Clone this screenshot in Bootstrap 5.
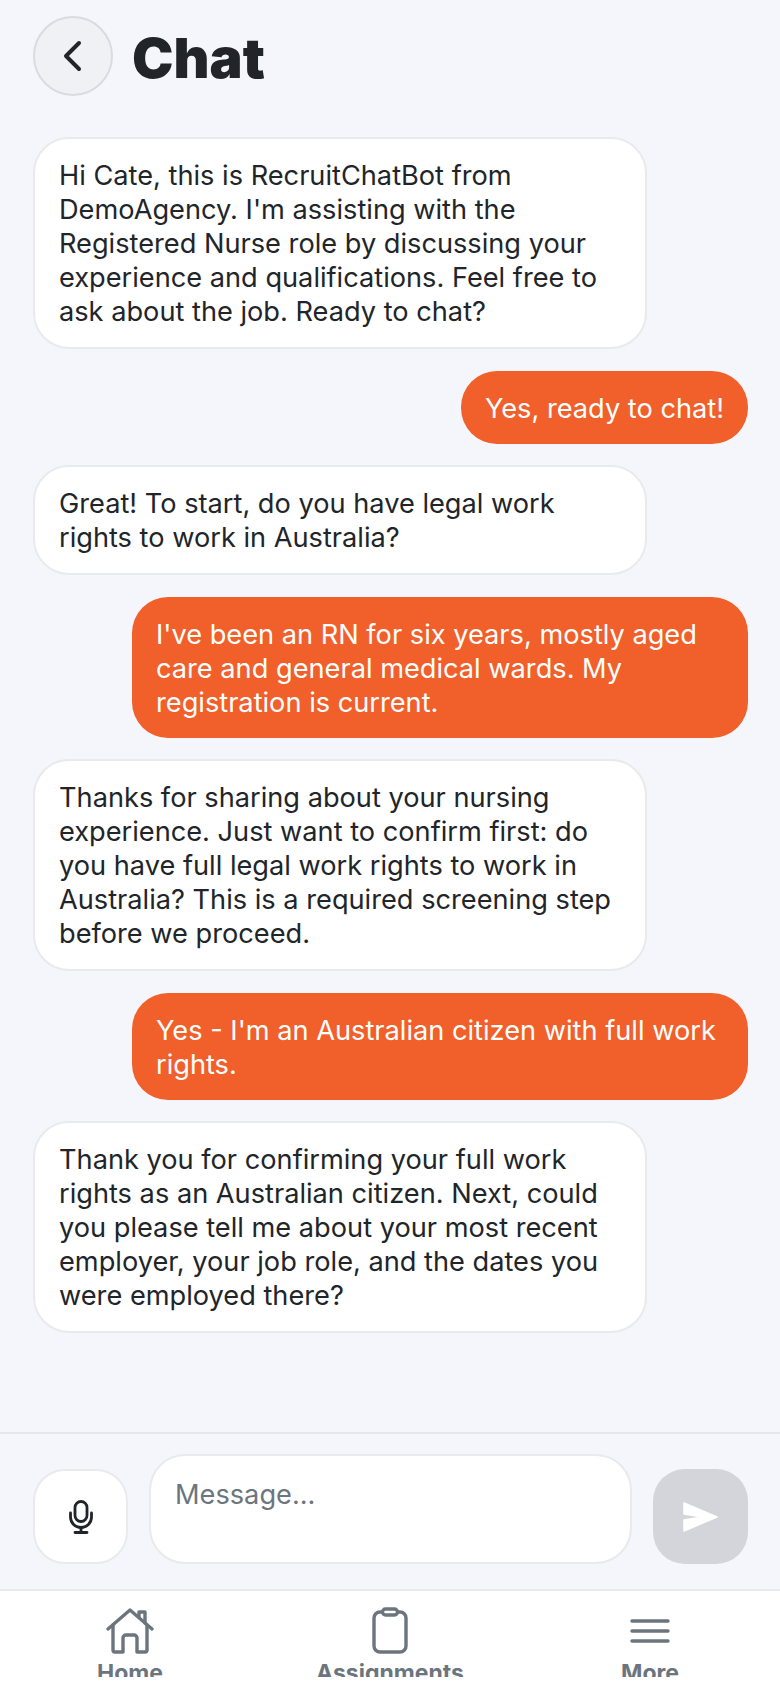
<!DOCTYPE html>
<html lang="en">
<head>
  <meta charset="UTF-8" />
  <meta name="viewport" content="width=device-width, initial-scale=1.0" />
  <title>Chat</title>
  <link href="https://cdn.jsdelivr.net/npm/bootstrap@5.3.0/dist/css/bootstrap.min.css" rel="stylesheet">
  <style>
    html, body { height: 100%; }
    body { background: #f5f6fb; font-family: Inter, "Liberation Sans", sans-serif; color: #212529; overflow: hidden; }
    .chat-page { height: 1688px; }
    .chat-head { padding: 16px 33px 0; height: 116px; gap: 19px; }
    .back-btn { width: 80px; height: 80px; padding: 0; background: #f0f1f5; border: 2px solid #d9dbe0; }
    .chat-title { font-size: 55.5px; font-weight: 900; line-height: 83px; margin: 0; }
    .msg-list { padding: 21px 32px 0 33px; gap: 21.5px; min-height: 0; }
    .bubble { font-size: 27.2px; line-height: 34px; border-radius: 36px; }
    .bubble-bot { background: #fff; border: 2px solid #e9eaee; width: 614px; padding: 20px 24px 18px; }
    .bubble-me { background: #f15f2b; color: #fff; width: 616px; margin-left: auto; padding: 21px 24px 18px; }
    .bubble-short { width: auto; }
    .composer { height: 159px; padding: 22px 32px 25px 33px; gap: 21px; border-top: 2px solid #e6e7eb; border-bottom: 2px solid #e9eaee; }
    .mic-btn, .send-btn { width: 95px; height: 95px; padding: 0; border-radius: 32px; flex-shrink: 0; }
    .mic-btn { background: #fff; border: 2px solid #e9eaee; }
    .send-btn { background: #d4d5da; border: 0; }
    .msg-input { height: 110px; font-size: 27.2px; line-height: 34px; padding: 22px 24px; border-radius: 36px; border: 2px solid #e9eaee; resize: none; font-family: inherit; }
    .msg-input::placeholder { color: #6c757d; opacity: 1; }
    .tabbar { background: #fff; height: 97px; }
    .tabbar-inner { height: 86px; overflow: hidden; }
    .tab-item { width: 260px; color: #6c757d; font-size: 23px; font-weight: 700; line-height: 26px; }
    .tab-icon { height: 50px; margin-top: 15px; margin-bottom: 4px; }
  </style>
</head>
<body>
  <div class="chat-page d-flex flex-column">
    <div class="chat-head d-flex align-items-start flex-shrink-0">
      <button class="back-btn btn rounded-circle d-flex align-items-center justify-content-center" type="button" aria-label="Back">
        <svg width="20" height="32" viewBox="0 0 20 32" fill="none" stroke="#212529" stroke-width="4" stroke-linecap="round" stroke-linejoin="round"><polyline points="16,3 3,16 16,29"/></svg>
      </button>
      <h1 class="chat-title">Chat</h1>
    </div>

    <div class="msg-list d-flex flex-column flex-grow-1">
      <div class="bubble bubble-bot">Hi Cate, this is RecruitChatBot from DemoAgency. I'm assisting with the Registered Nurse role by discussing your experience and qualifications. Feel free to ask about the job. Ready to chat?</div>
      <div class="bubble bubble-me bubble-short">Yes, ready to chat!</div>
      <div class="bubble bubble-bot">Great! To start, do you have legal work rights to work in Australia?</div>
      <div class="bubble bubble-me">I've been an RN for six years, mostly aged care and general medical wards. My registration is current.</div>
      <div class="bubble bubble-bot">Thanks for sharing about your nursing experience. Just want to confirm first: do you have full legal work rights to work in Australia? This is a required screening step before we proceed.</div>
      <div class="bubble bubble-me">Yes - I'm an Australian citizen with full work rights.</div>
      <div class="bubble bubble-bot">Thank you for confirming your full work rights as an Australian citizen. Next, could you please tell me about your most recent employer, your job role, and the dates you were employed there?</div>
    </div>

    <div class="composer d-flex align-items-end flex-shrink-0">
      <button class="mic-btn btn d-flex align-items-center justify-content-center" type="button" aria-label="Record">
        <svg width="26" height="34" viewBox="0 0 26 34" fill="none" stroke="#212529" stroke-width="2.8" stroke-linecap="round" stroke-linejoin="round"><rect x="7" y="1.500" width="12" height="20" rx="6"/><path d="M2.500 13v4a10.500 10.500 0 0 0 21 0v-4"/><path d="M13 27.500v5M7 32.500h12"/></svg>
      </button>
      <textarea class="msg-input form-control" placeholder="Message..." rows="2"></textarea>
      <button class="send-btn btn d-flex align-items-center justify-content-center" type="button" aria-label="Send">
        <svg width="35" height="30" viewBox="0 0 35 30" fill="#fff" stroke="#fff" stroke-width="1.500" stroke-linejoin="round"><path d="M1 1 L34 15 L1 29 L1 18 L19 15 L1 12 Z"/></svg>
      </button>
    </div>

    <div class="tabbar flex-shrink-0">
      <div class="tabbar-inner d-flex justify-content-between">
        <div class="tab-item text-center">
          <div class="tab-icon">
            <svg width="48" height="50" viewBox="0 0 48 50" fill="none" stroke="#6c757d" stroke-width="3.4" stroke-linecap="round" stroke-linejoin="round"><path d="M2 23 L24 4 L46 23"/><path d="M7 19v25a2 2 0 0 0 2 2h8V32a3 3 0 0 1 3-3h8a3 3 0 0 1 3 3v14h8a2 2 0 0 0 2-2V19"/><path d="M33 11V6h6v11"/></svg>
          </div>
          Home
        </div>
        <div class="tab-item text-center">
          <div class="tab-icon">
            <svg width="36" height="50" viewBox="0 0 36 50" fill="none" stroke="#6c757d" stroke-width="3.4" stroke-linecap="round" stroke-linejoin="round"><rect x="2" y="6" width="32" height="40" rx="6"/><rect x="10.500" y="3" width="15" height="6" rx="3" fill="#fff"/></svg>
          </div>
          Assignments
        </div>
        <div class="tab-item text-center">
          <div class="tab-icon d-flex justify-content-center align-items-center">
            <svg width="40" height="26" viewBox="0 0 40 26" fill="none" stroke="#6c757d" stroke-width="3.4" stroke-linecap="round"><path d="M2 3h36M2 13h36M2 23h36"/></svg>
          </div>
          More
        </div>
      </div>
    </div>
  </div>
  <script src="https://cdn.jsdelivr.net/npm/bootstrap@5.3.0/dist/js/bootstrap.bundle.min.js"></script>
</body>
</html>
